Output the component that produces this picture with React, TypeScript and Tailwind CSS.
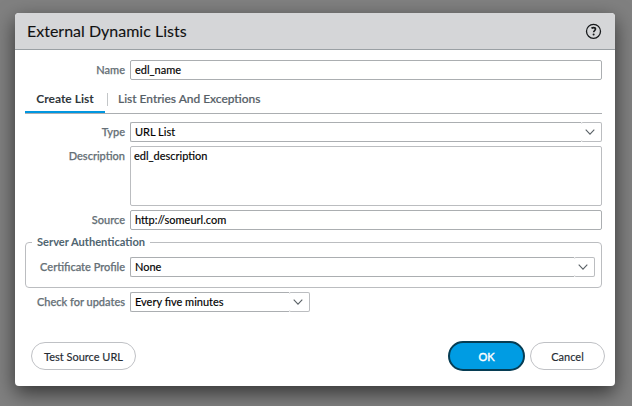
import React from "react";

const inputBox =
  "flex h-5 items-center rounded-[2px] border border-[#abaeb1] bg-white pl-1 text-[11px] text-black [-webkit-text-stroke:0.15px_currentColor]";

function Row({ label, className = "", top = false, children }: {
  label: string;
  className?: string;
  top?: boolean;
  children: React.ReactNode;
}) {
  return (
    <div className={`flex ${top ? "items-start" : "items-center"} ${className}`}>
      <span
        className={`w-[100px] shrink-0 pr-[5px] text-right text-[11px] font-medium whitespace-nowrap text-[#656f76] [-webkit-text-stroke:0.25px_currentColor] ${top ? "pt-[3px] leading-[14px]" : "leading-5"}`}
      >
        {label}
      </span>
      {children}
    </div>
  );
}

function Select({ value, className = "" }: { value: string; className?: string }) {
  return (
    <div className={`flex ${className}`}>
      <div className={`${inputBox} grow rounded-r-none border-r-0`}>{value}</div>
      <div className="flex h-5 w-[21px] items-center justify-center rounded-[2px] border border-l-0 border-[#bbbdc0] pr-[3px]">
        <svg width="10" height="6" viewBox="0 0 10 6" fill="none" stroke="#5a6166" strokeWidth="1.1">
          <path d="M0.7 0.7 5 5.1 9.3 0.7" />
        </svg>
      </div>
    </div>
  );
}

export default function App() {
  return (
    <div className="h-[406px] w-[632px] overflow-hidden bg-[#808080] pt-[13px] pl-[15px] font-['Lato',sans-serif]">
      <div className="flex h-[373px] w-[600px] flex-col overflow-hidden rounded-[4px] bg-white shadow-[0_7px_20px_rgba(0,0,0,0.6)]">
        <header className="flex h-[37px] shrink-0 items-center justify-between border-b border-[#9aa0a4] bg-[#d5d6d8] pr-[13px] pl-3">
          <h1 className="text-[16px] text-[#111] [-webkit-text-stroke:0.1px_currentColor]">External Dynamic Lists</h1>
          <svg width="17" height="16" viewBox="0 0 17 16" fill="none" stroke="#16191b">
            <circle cx="8.5" cy="8.3" r="7" strokeWidth="1.3" />
            <path d="M6.5 5.4Q7.3 4.6 8.5 4.6C9.8 4.6 10.5 5.2 10.5 6.1C10.5 7.5 8.6 7.6 8.6 9.3" strokeWidth="1.6" />
            <circle cx="8.6" cy="11.5" r="1" fill="#16191b" stroke="none" />
          </svg>
        </header>
        <main className="flex grow flex-col pt-[10px] pr-[13px] pl-[10px]">
          <Row label="Name" className="pl-[5px]">
            <div className={`${inputBox} grow`}>edl_name</div>
          </Row>
          <nav className="mt-2 flex h-[26px] border-b border-[#abaeb1] text-[12px] leading-[22px]">
            <div className="h-[25px] w-[80px] border-b-2 border-[#0096e0] text-center font-bold text-[#30373c]">
              Create List
            </div>
            <div className="mt-[5px] ml-[2px] h-[13px] w-px bg-[#c3c6c8]" />
            <div className="ml-[10px] text-[11.95px] font-medium text-[#566067] [-webkit-text-stroke:0.2px_currentColor]">
              List Entries And Exceptions
            </div>
          </nav>
          <Row label="Type" className="mt-2 pl-[5px]">
            <Select value="URL List" className="grow" />
          </Row>
          <Row label="Description" top className="mt-1 pl-[5px]">
            <div className="h-[60px] grow rounded-[2px] border border-[#bbbdc0] pt-[2px] pl-[3px] text-[11px] leading-[14px] text-black [-webkit-text-stroke:0.15px_currentColor]">
              edl_description
            </div>
          </Row>
          <Row label="Source" className="mt-1 pl-[5px]">
            <div className={`${inputBox} grow`}>http://someurl.com</div>
          </Row>
          <fieldset className="mt-[5px] h-[53px] rounded-[4px] border border-[#bbbdc0] pr-[6px] pl-1">
            <legend className="ml-[2px] px-[5px] text-[11.1px] leading-[14px] font-bold text-[#506570]">
              Server Authentication
            </legend>
            <Row label="Certificate Profile" className="mt-2">
              <Select value="None" className="grow" />
            </Row>
          </fieldset>
          <Row label="Check for updates" className="mt-1 pl-[5px]">
            <Select value="Every five minutes" className="w-[180px]" />
          </Row>
        </main>
        <footer className="flex h-[45px] shrink-0 items-start pr-[10px] pl-4 text-[11px] [-webkit-text-stroke:0.15px_currentColor]">
          <button className="mt-px h-7 w-[105px] rounded-full border border-[#bfc1c5] pt-[2px] text-[#252b32]">
            Test Source URL
          </button>
          <button className="ml-auto h-[30px] w-[77px] rounded-full border-2 border-[#063d54] bg-[#009ce3] pt-[2px] text-white [-webkit-text-stroke:0.4px_currentColor]">
            OK
          </button>
          <button className="mt-px ml-[5px] h-7 w-[75px] rounded-full border border-[#bfc1c5] pt-[2px] text-[#252b32]">
            Cancel
          </button>
        </footer>
      </div>
    </div>
  );
}
